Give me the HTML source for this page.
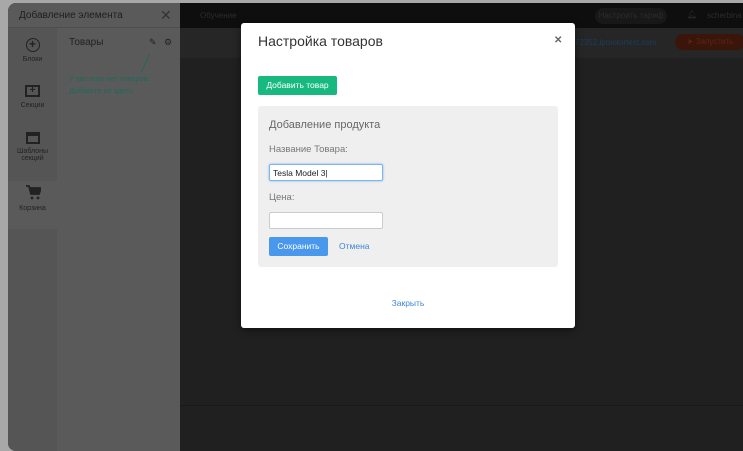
<!DOCTYPE html>
<html><head><meta charset="utf-8"><style>
*{box-sizing:border-box;margin:0;padding:0}
body{width:743px;height:451px;overflow:hidden;background:#a8a8a8;font-family:"Liberation Sans","Noto Sans CJK SC",sans-serif;position:relative}
.win{position:absolute;left:8px;top:3px;width:735px;height:448px;background:#202020;border-radius:8px 0 0 8px;overflow:hidden}
.side{position:absolute;left:0;top:0;width:172px;height:448px;background:#5a5a5a}
.icons{position:absolute;left:0;top:25px;width:49px;height:423px;background:#555}
.sh{position:absolute;left:0;top:0;width:172px;height:25px;border-bottom:1px solid #4e4e4e;color:#1e1e1e;font-size:10px;padding:7px 0 0 11px}
.ic{position:absolute;left:0;width:49px;text-align:center;color:#222;font-size:7px}
.nav{position:absolute;left:172px;top:0;right:0;height:25px;background:#0e0e0e;color:#2c2c2c;font-size:8px}
.bar2{position:absolute;left:172px;top:25px;right:0;height:30px;background:#262626}
.bot{position:absolute;left:172px;top:402px;right:0;height:1px;background:#191919}
.modal{position:absolute;left:241px;top:23px;width:334px;height:305px;background:#fff;border-radius:3px;box-shadow:0 2px 8px rgba(0,0,0,.5)}
.t{position:absolute;left:17px;top:10px;font-size:14px;color:#333}
.x{position:absolute;left:313px;top:12px;font-size:10px;color:#666;font-weight:bold}
.gb{position:absolute;left:17px;top:53px;width:79px;height:19px;background:#18b97f;border-radius:2px;color:#fff;font-size:8.5px;text-align:center;line-height:19px}
.panel{position:absolute;left:17px;top:83px;width:300px;height:161px;background:#efefef;border-radius:3px}
.pt{position:absolute;left:11px;top:13px;font-size:11px;color:#666}
.lb{position:absolute;left:11px;font-size:9.5px;color:#777}
.in{position:absolute;left:11px;width:114px;height:17px;background:#fff;border:1px solid #ccc;border-radius:2px;font-size:8.5px;color:#222;padding:3px 3px}
.in.f{border-color:#7fb4ef;box-shadow:0 0 2px #7fb4ef}
.sv{position:absolute;left:11px;top:131px;width:59px;height:19px;background:#4a97ee;border-radius:2px;color:#fff;font-size:8.5px;text-align:center;line-height:19px}
.cn{position:absolute;left:81px;top:135px;font-size:8.5px;color:#3a87d6}
.cl{position:absolute;left:0;width:334px;top:275px;text-align:center;font-size:8.5px;color:#3a87d6}
</style></head><body>
<div class="win">
 <div class="side">
  <div class="sh">Добавление элемента<span style="position:absolute;left:152px;top:5px;font-size:14px;color:#333;line-height:14px">✕</span></div>
  <div class="icons">
   <div class="ic" style="top:10px"><div style="width:14px;height:14px;border:1.5px solid #222;border-radius:50%;margin:0 auto 4px;font-size:12px;line-height:10px;font-weight:bold">+</div>Блоки</div>
   <div class="ic" style="top:57px"><div style="width:15px;height:12px;border:2px solid #222;margin:0 auto 5px;font-size:10px;line-height:8px;font-weight:bold">+</div>Секции</div>
   <div class="ic" style="top:104px"><div style="width:14px;height:12px;border:2px solid #222;border-top-width:4px;margin:0 auto 4px"></div>Шаблоны<br>секций</div>
   <div class="ic" style="top:153px;height:48px;background:#5a5a5a;width:49px;padding-top:3px"><svg width="16" height="16" viewBox="0 0 16 16" style="display:block;margin:0 auto 5px"><path d="M1 2h3l2 8h8l2-6H5" fill="none" stroke="#222" stroke-width="1.8"/><path d="M5 4h11l-2 6H6z" fill="#222"/><circle cx="7" cy="14" r="1.4" fill="#222"/><circle cx="13" cy="14" r="1.4" fill="#222"/></svg>Корзина</div>
  </div>
  <div style="position:absolute;left:61px;top:34px;font-size:10px;color:#222">Товары</div>
  <div style="position:absolute;left:141px;top:34px;font-size:9px;color:#222">✎</div>
  <div style="position:absolute;left:156px;top:34px;font-size:9px;color:#222">⚙</div>
  <div style="position:absolute;left:137px;top:50px;width:1px;height:20px;background:#1c6b5a;transform:rotate(25deg)"></div>
  <div style="position:absolute;left:61px;top:70px;font-size:7.5px;color:#1c6b5a;line-height:12px">У вас еще нет товаров.<br>Добавьте их здесь</div>
 </div>
 <div class="nav"><span style="position:absolute;left:20px;top:8px">Обучение</span><span style="position:absolute;left:415px;top:5px;width:72px;height:16px;background:#181818;border-radius:8px;text-align:center;line-height:16px">Настроить тариф</span><span style="position:absolute;left:507px;top:7px">🔔︎</span><span style="position:absolute;left:527px;top:8px">scherbina</span></div>
 <div class="bar2"><span style="position:absolute;left:395px;top:10px;font-size:8px;color:#1d3c5c">72352.lpmotortest.com</span><span style="position:absolute;left:495px;top:6px;width:70px;height:16px;background:#3b1509;border-radius:8px;color:#5a2515;font-size:8px;text-align:center;line-height:16px">➤ Запустить</span></div>
 <div class="bot"></div>
</div>
<div class="modal">
 <div class="t">Настройка товаров</div>
 <div class="x">✕</div>
 <div class="gb">Добавить товар</div>
 <div class="panel">
  <div class="pt">Добавление продукта</div>
  <div class="lb" style="top:38px">Название Товара:</div>
  <div class="in f" style="top:58px">Tesla Model 3|</div>
  <div class="lb" style="top:86px">Цена:</div>
  <div class="in" style="top:106px"></div>
  <div class="sv">Сохранить</div>
  <div class="cn">Отмена</div>
 </div>
 <div class="cl">Закрыть</div>
</div>
</body></html>
